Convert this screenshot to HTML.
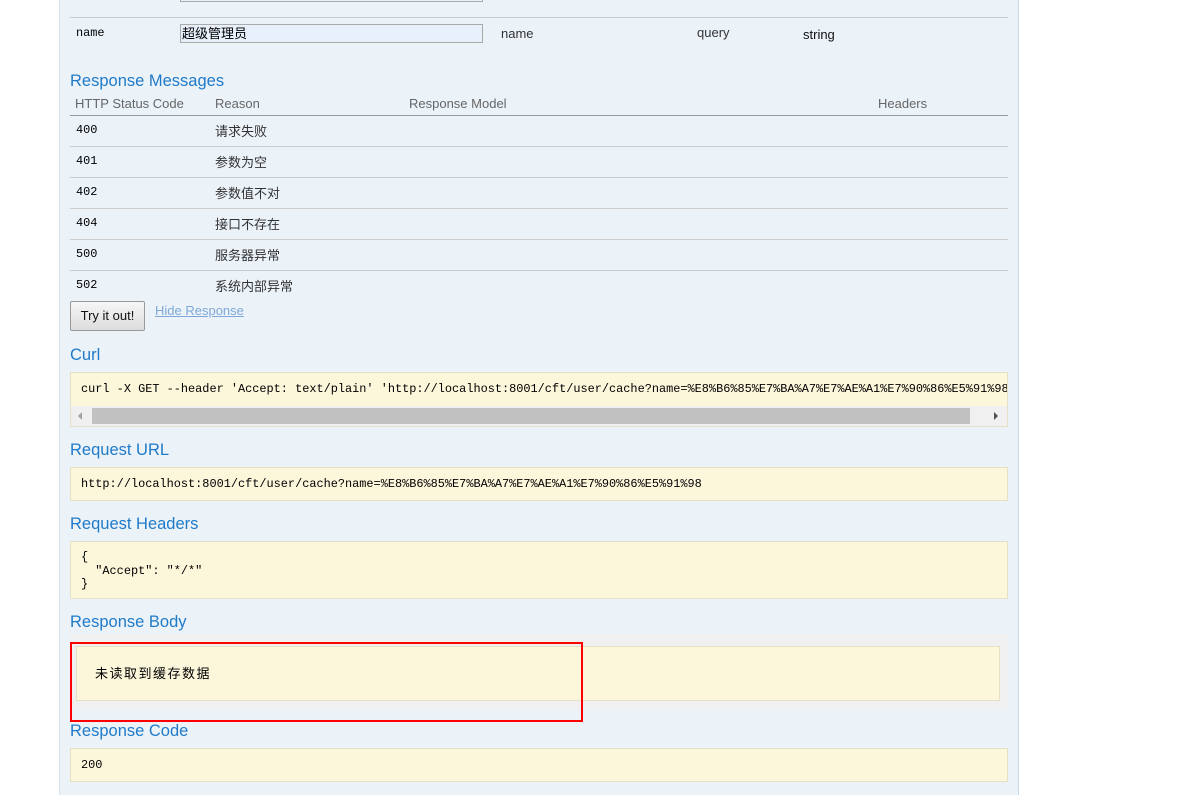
<!DOCTYPE html>
<html><head><meta charset="utf-8"><style>
*{margin:0;padding:0;box-sizing:border-box}
body{width:1182px;height:795px;background:#fff;position:relative;overflow:hidden;font-family:"Liberation Sans","Noto Sans CJK SC",sans-serif}
.a{position:absolute}
.panel{left:59px;top:0;width:960px;height:795px;background:#ebf3f9;border-left:1px solid #d6e2ec;border-right:1px solid #c5d9ea}
.h{color:#1f7ac8;font-size:16.5px;left:70px}
.mono{font-family:"Liberation Mono","Noto Sans CJK SC",monospace;font-size:11.9px;color:#000}
.cn{font-size:13px;color:#333;font-family:"Liberation Sans","Noto Sans CJK SC",sans-serif}
.line{left:70px;width:938px;height:1px;background:#ccc}
.box{left:70px;width:938px;background:#fcf6db;border:1px solid #e5e0c6}
.th{font-size:13px;color:#666}
</style></head><body>
<div class="a panel"></div>
<div class="a" style="left:180px;top:-8px;width:303px;height:10px;border:1px solid #aaa;background:#ebf3f9"></div>
<div class="a" style="left:70px;top:17px;width:938px;height:1px;background:#ccc"></div>
<div class="a mono" style="left:76px;top:26px">name</div>
<div class="a" style="left:180px;top:24px;width:303px;height:19px;border:1px solid #aaa;background:#e8f0fb;font-size:13px;font-family:'Liberation Sans','Noto Sans CJK SC',sans-serif;padding-left:1px;line-height:17px">超级管理员</div>
<div class="a" style="left:501px;top:26px;font-size:13px;color:#333">name</div>
<div class="a" style="left:697px;top:25px;font-size:13px;color:#333">query</div>
<div class="a" style="left:803px;top:27px;font-size:13px;color:#111">string</div>

<div class="a h" style="top:72px">Response Messages</div>
<div class="a th" style="left:75px;top:96px">HTTP Status Code</div>
<div class="a th" style="left:215px;top:96px">Reason</div>
<div class="a th" style="left:409px;top:96px">Response Model</div>
<div class="a th" style="left:878px;top:96px">Headers</div>
<div class="a line" style="top:115px;background:#999"></div>
<div class="a mono" style="left:76px;top:123px">400</div><div class="a cn" style="left:215px;top:121px">请求失败</div>
<div class="a line" style="top:146px"></div>
<div class="a mono" style="left:76px;top:154px">401</div><div class="a cn" style="left:215px;top:152px">参数为空</div>
<div class="a line" style="top:177px"></div>
<div class="a mono" style="left:76px;top:185px">402</div><div class="a cn" style="left:215px;top:183px">参数值不对</div>
<div class="a line" style="top:208px"></div>
<div class="a mono" style="left:76px;top:216px">404</div><div class="a cn" style="left:215px;top:214px">接口不存在</div>
<div class="a line" style="top:239px"></div>
<div class="a mono" style="left:76px;top:247px">500</div><div class="a cn" style="left:215px;top:245px">服务器异常</div>
<div class="a line" style="top:270px"></div>
<div class="a mono" style="left:76px;top:278px">502</div><div class="a cn" style="left:215px;top:276px">系统内部异常</div>

<div class="a" style="left:70px;top:301px;width:75px;height:30px;border:1px solid #999;border-radius:2px;background:linear-gradient(#f6f6f6,#ddd);font-size:13px;text-align:center;line-height:28px;color:#111">Try it out!</div>
<div class="a" style="left:155px;top:303px;font-size:13px;color:#7fa8d8;text-decoration:underline">Hide Response</div>

<div class="a h" style="top:346px">Curl</div>
<div class="a box" style="top:372px;height:55px;overflow:hidden">
<div class="mono" style="position:absolute;left:10px;top:9px;white-space:nowrap">curl -X GET --header 'Accept: text/plain' 'http://localhost:8001/cft/user/cache?name=%E8%B6%85%E7%BA%A7%E7%AE%A1%E7%90%86%E5%91%98'</div>
<div style="position:absolute;left:0;top:33px;width:936px;height:20px;background:#f0f0f0"></div>
<div style="position:absolute;left:21px;top:35px;width:878px;height:16px;background:#c1c1c1"></div>
<div style="position:absolute;left:7px;top:39px;width:0;height:0;border-top:4px solid transparent;border-bottom:4px solid transparent;border-right:4px solid #a3a3a3"></div>
<div style="position:absolute;left:923px;top:39px;width:0;height:0;border-top:4px solid transparent;border-bottom:4px solid transparent;border-left:4px solid #505050"></div>
</div>

<div class="a h" style="top:441px">Request URL</div>
<div class="a box" style="top:467px;height:34px"><div class="mono" style="position:absolute;left:10px;top:9px">http://localhost:8001/cft/user/cache?name=%E8%B6%85%E7%BA%A7%E7%AE%A1%E7%90%86%E5%91%98</div></div>

<div class="a h" style="top:515px">Request Headers</div>
<div class="a box" style="top:541px;height:58px"><div class="mono" style="position:absolute;left:10px;top:9px;line-height:13.5px;white-space:pre">{
  "Accept": "*/*"
}</div></div>

<div class="a h" style="top:613px">Response Body</div>
<div class="a" style="left:70px;top:634px;width:938px;height:75px;background:#f0f0f0"></div>
<div class="a" style="left:76px;top:646px;width:924px;height:55px;background:#fcf6db;border:1px solid #e5e0c6"></div>
<div class="a" style="left:95px;top:663px;font-size:13px;letter-spacing:1.5px;color:#000;font-family:'Noto Sans CJK SC',sans-serif">未读取到缓存数据</div>
<div class="a" style="left:70px;top:642px;width:513px;height:80px;border:2px solid #f00"></div>

<div class="a h" style="top:722px">Response Code</div>
<div class="a box" style="top:748px;height:34px"><div class="mono" style="position:absolute;left:10px;top:9px">200</div></div>
</body></html>
